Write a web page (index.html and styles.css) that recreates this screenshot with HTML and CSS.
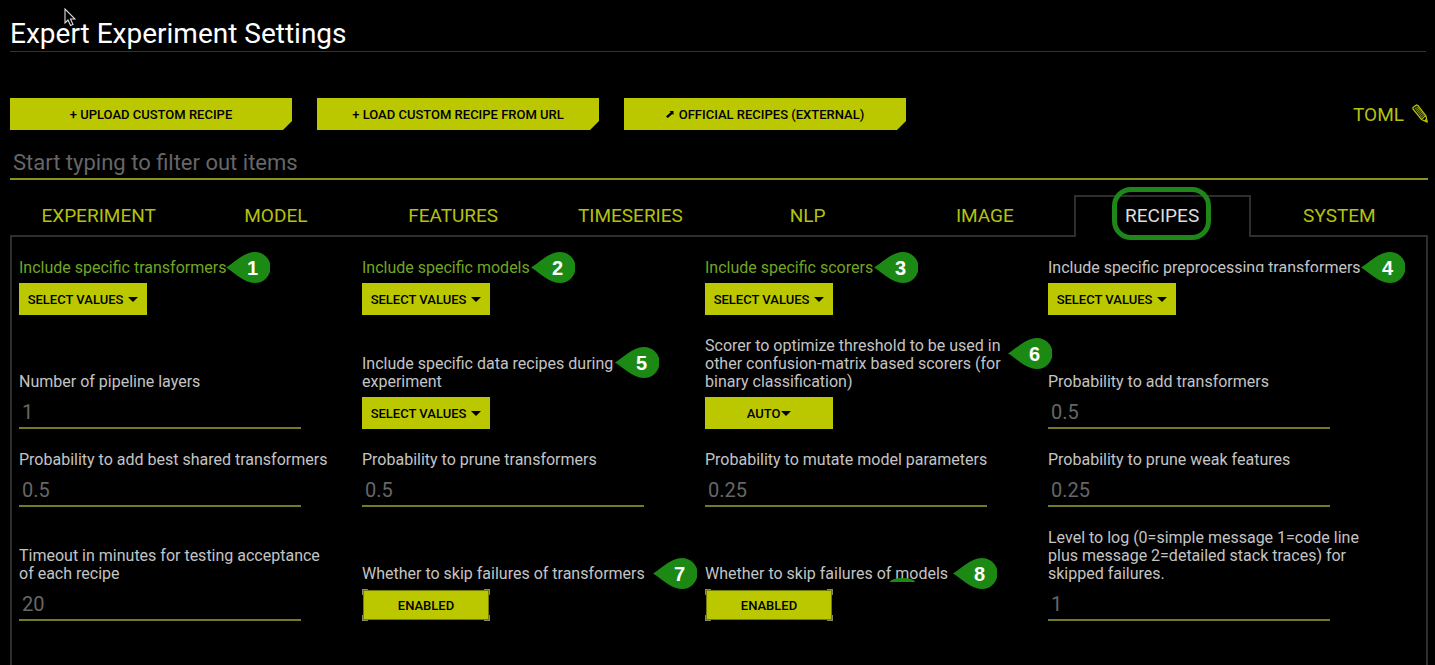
FILE: index.html
```html
<!DOCTYPE html>
<html lang="en">
<head>
<meta charset="utf-8">
<meta name="viewport" content="width=device-width, initial-scale=1">
<title>Expert Experiment Settings</title>
<link rel="stylesheet" href="styles.css">
</head>
<body>
<main class="page">
  <header class="heading">
    <h1>Expert Experiment Settings</h1>
    <svg class="pointer" viewBox="0 0 12 19" width="12" height="19" aria-hidden="true"><path d="M1 1v14l3-3 2.500 5.500 2.500-1-2.500-5.500H11z" fill="#000" stroke="#ddd" stroke-width="1.100"/></svg>
  </header>

  <div class="toolbar">
    <button class="action" type="button">+ UPLOAD CUSTOM RECIPE</button>
    <button class="action" type="button">+ LOAD CUSTOM RECIPE FROM URL</button>
    <button class="action" type="button"><svg viewBox="0 0 8 8" width="8" height="8" aria-hidden="true"><path d="M3.500 1H7.500v4L6.300 4 1.800 8 0 6.500 4.700 2.200z"/></svg>OFFICIAL RECIPES (EXTERNAL)</button>
    <a class="toml" href="#toml">TOML
      <svg viewBox="0 0 16 20" width="16" height="20" aria-hidden="true" fill="none" stroke="#b4c110"><path d="M1 3.500 4.500 1 6 1.500 14 12l1 6-5.500-2.500L1 5z" stroke-width="1.300"/><path d="M3 4 11 15M5 2.500 13 13M4 3.300 12 14" stroke-width=".8"/><path d="m9.500 15.500 1.500-1.500 1-.5 1-1.500 1 .3" stroke-width="1"/><path d="m12.500 16.500 2.500 1.500-.5-3z" fill="#b4c110"/></svg>
    </a>
  </div>

  <input class="filter" type="search" aria-label="Filter items" placeholder="Start typing to filter out items">

  <div class="tabs" role="tablist">
    <button class="tab" type="button" role="tab">EXPERIMENT</button>
    <button class="tab" type="button" role="tab">MODEL</button>
    <button class="tab" type="button" role="tab">FEATURES</button>
    <button class="tab" type="button" role="tab">TIMESERIES</button>
    <button class="tab" type="button" role="tab">NLP</button>
    <button class="tab" type="button" role="tab">IMAGE</button>
    <button class="tab active" type="button" role="tab" aria-selected="true"><span class="ring"></span>RECIPES</button>
    <button class="tab" type="button" role="tab">SYSTEM</button>
  </div>

  <section class="panel" role="tabpanel" aria-label="Recipes">
    <div class="field changed">
      <label for="transformers">Include specific transformers</label>
      <button class="pick" id="transformers" type="button">SELECT VALUES<i class="caret"></i></button>
      <span class="pin pin-1">1</span>
    </div>
    <div class="field changed">
      <label for="models">Include specific models</label>
      <button class="pick" id="models" type="button">SELECT VALUES<i class="caret"></i></button>
      <span class="pin pin-2">2</span>
    </div>
    <div class="field changed">
      <label for="scorers">Include specific scorers</label>
      <button class="pick" id="scorers" type="button">SELECT VALUES<i class="caret"></i></button>
      <span class="pin pin-3">3</span>
    </div>
    <div class="field">
      <label for="preprocessing">Include specific preprocessing transformers</label>
      <span class="cover"></span>
      <button class="pick" id="preprocessing" type="button">SELECT VALUES<i class="caret"></i></button>
      <span class="pin pin-4">4</span>
    </div>

    <div class="field">
      <label for="layers">Number of pipeline layers</label>
      <input class="value" id="layers" value="1">
    </div>
    <div class="field">
      <label for="data">Include specific data recipes during<br>experiment</label>
      <button class="pick" id="data" type="button">SELECT VALUES<i class="caret"></i></button>
      <span class="pin pin-5">5</span>
    </div>
    <div class="field">
      <label for="threshold">Scorer to optimize threshold to be used in<br>other confusion-matrix based scorers (for<br>binary classification)</label>
      <button class="pick tight" id="threshold" type="button" aria-haspopup="listbox">AUTO<i class="caret"></i></button>
      <span class="pin pin-6">6</span>
    </div>
    <div class="field">
      <label for="add">Probability to add transformers</label>
      <input class="value" id="add" value="0.5">
    </div>

    <div class="field">
      <label for="shared">Probability to add best shared transformers</label>
      <input class="value" id="shared" value="0.5">
    </div>
    <div class="field">
      <label for="prune">Probability to prune transformers</label>
      <input class="value" id="prune" value="0.5">
    </div>
    <div class="field">
      <label for="mutate">Probability to mutate model parameters</label>
      <input class="value" id="mutate" value="0.25">
    </div>
    <div class="field">
      <label for="weak">Probability to prune weak features</label>
      <input class="value" id="weak" value="0.25">
    </div>

    <div class="field">
      <label for="timeout">Timeout in minutes for testing acceptance<br>of each recipe</label>
      <input class="value" id="timeout" value="20">
    </div>
    <div class="field">
      <label for="skip-transformers">Whether to skip failures of transformers</label>
      <button class="toggle" id="skip-transformers" type="button" aria-pressed="true">ENABLED</button>
      <span class="pin pin-7">7</span>
    </div>
    <div class="field">
      <label for="skip-models">Whether to skip failures of models</label>
      <span class="arc"></span>
      <button class="toggle" id="skip-models" type="button" aria-pressed="true">ENABLED</button>
      <span class="pin pin-8">8</span>
    </div>
    <div class="field">
      <label for="level">Level to log (0=simple message 1=code line<br>plus message 2=detailed stack traces) for<br>skipped failures.</label>
      <input class="value" id="level" value="1">
    </div>
  </section>
</main>
</body>
</html>
```

FILE: styles.css
```css
* { box-sizing: border-box; }

body {
  margin: 0;
  background: #000;
  color: #c4c4c4;
  font-family: Roboto, "Liberation Sans", sans-serif;
}

button, input {
  font-family: inherit;
  border: 0;
  border-radius: 0;
}

.page {
  display: flex;
  flex-direction: column;
  min-height: 100vh;
  padding: 17px 7px 0 10px;
}

.heading {
  position: relative;
  margin-right: 2px;
  border-bottom: 1px solid #333;
}

h1 {
  margin: 0;
  color: #fff;
  font-size: 28px;
  font-weight: 400;
  line-height: 34px;
}

.pointer {
  position: absolute;
  left: 54px;
  top: -9px;
}

.toolbar {
  display: flex;
  gap: 25px;
  align-items: center;
  margin-top: 46px;
}

.action {
  display: flex;
  align-items: center;
  justify-content: center;
  gap: 5px;
  width: 282px;
  height: 32px;
  background: #bbc800;
  color: #000;
  font-size: 13px;
  font-weight: 500;
  clip-path: polygon(0 0, 100% 0, 100% 23px, calc(100% - 9px) 100%, 0 100%);
}

.toml {
  display: flex;
  align-items: center;
  gap: 8px;
  margin-left: auto;
  color: #b4c110;
  font-size: 19px;
  text-decoration: none;
}

.filter {
  width: 100%;
  height: 36px;
  margin-top: 14px;
  padding: 3px 3px 0;
  background: none;
  border-bottom: 2px solid #8a9219;
  color: #ccc;
  font-size: 22px;
  outline: 0;
  appearance: none;
}

.filter::placeholder { color: #666; opacity: 1; }

.tabs {
  display: grid;
  grid-template-columns: repeat(8, 1fr);
  margin-top: 15px;
}

.tab {
  position: relative;
  height: 42px;
  padding: 0;
  background: none;
  border-bottom: 2px solid #2e2e2e;
  color: #b4c110;
  font-size: 19px;
}

.tab.active {
  padding-bottom: 4px;
  border: 2px solid #2e2e2e;
  border-bottom: 0;
  color: #ddd;
}

.ring {
  position: absolute;
  left: calc(50% - 50px);
  top: -10px;
  width: 99px;
  height: 53px;
  border: 5px solid #1f861a;
  border-radius: 19px;
}

.panel {
  display: grid;
  grid-template-columns: repeat(4, 1fr);
  grid-auto-rows: max-content;
  align-items: end;
  flex: 1;
  row-gap: 22px;
  padding: 22px 35px 44px 7px;
  border: solid #2e2e2e;
  border-width: 0 2px;
}

.field {
  position: relative;
  display: flex;
  flex-direction: column;
  align-items: flex-start;
  gap: 6px;
}

.field label {
  font-size: 16px;
  line-height: 18px;
  white-space: nowrap;
}

.changed label { color: #72a622; }

.pick, .toggle {
  display: flex;
  align-items: center;
  justify-content: center;
  gap: 5px;
  width: 128px;
  height: 32px;
  padding: 0;
  background: #bbc800;
  color: #000;
  font-size: 14px;
  font-weight: 500;
}

.pick, .toggle { font-size: 13px; }

.tight { gap: 1px; }

.caret {
  border: 5px solid transparent;
  border-top-color: #000;
  border-bottom: 0;
}

.toggle {
  background:
    linear-gradient(#bbc800, #bbc800) center / calc(100% - 4px) calc(100% - 4px) no-repeat,
    linear-gradient(#747c08, #747c08) center / calc(100% - 2px) calc(100% - 2px) no-repeat,
    linear-gradient(#88896a, #88896a) 0 0 / 6px 6px no-repeat,
    linear-gradient(#88896a, #88896a) 100% 0 / 6px 6px no-repeat,
    linear-gradient(#88896a, #88896a) 0 100% / 6px 6px no-repeat,
    linear-gradient(#88896a, #88896a) 100% 100% / 6px 6px no-repeat;
}

.value {
  width: 282px;
  height: 32px;
  padding: 0 3px;
  background: none;
  border-bottom: 2px solid #767a22;
  color: #666;
  font-size: 20px;
  outline: 0;
}

/* Numbered callouts over the form */
.pin {
  position: absolute;
  z-index: 1;
  width: 44px;
  height: 31px;
  padding-left: 9px;
  background: #1c8914;
  clip-path: path("M0 15.500C7 12 17 0 29 0a15.500 15.500 0 0 1 0 31C17 31 7 19 0 15.500z");
  color: #fff;
  font: bold 20px/33px "Liberation Sans", sans-serif;
  text-align: center;
}

.pin-1 { left: 207px; top: -7px; }
.pin-2 { left: 169px; top: -7px; }
.pin-3 { left: 169px; top: -7px; }
.pin-4 { left: 313px; top: -7px; }
.pin-5 { left: 253px; top: -8px; }
.pin-6 { left: 303px; top: 1px; }
.pin-7 { left: 291px; top: -7px; }
.pin-8 { left: 248px; top: -7px; }

.cover {
  position: absolute;
  left: 192px;
  top: 13px;
  width: 83px;
  height: 7px;
  background: #000;
}

.arc {
  position: absolute;
  left: 185px;
  top: 13px;
  width: 25px;
  height: 4px;
  background: #1c8914;
  border-radius: 50% 50% 0 0 / 100% 100% 0 0;
}
```
